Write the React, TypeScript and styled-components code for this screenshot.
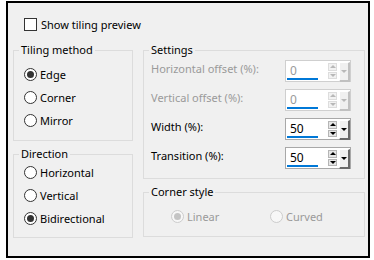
import styled, { createGlobalStyle } from "styled-components";

const GlobalStyle = createGlobalStyle`
  body {
    margin: 0;
    background: #ffffff;
    font-family: "Noto Sans", "DejaVu Sans", sans-serif;
    font-size: 11px;
    color: #000000;
  }
`;

const disabledText = "#9a9a9a";

const Frame = styled.div`
  box-sizing: border-box;
  width: 364px;
  height: 257px;
  margin: 1px 0 0 6px;
  border: 2px solid #000;
  background: #f0f0f0;
  padding: 15px 3px 0 5px;
  display: flex;
  flex-direction: column;
`;

const CheckRow = styled.label`
  display: flex;
  align-items: center;
  height: 13px;
  margin-left: 11px;
  gap: 4px;
`;

const CheckBox = styled.span`
  box-sizing: border-box;
  width: 13px;
  height: 13px;
  border: 1px solid #333;
  background: #fff;
  flex: none;
`;

const Columns = styled.div`
  display: flex;
  gap: 10px;
  margin-top: 12px;
`;

const Column = styled.div<{ $width?: number }>`
  display: flex;
  flex-direction: column;
  gap: 6px;
  ${({ $width }) => ($width ? `width: ${$width}px;` : "flex: 1;")}
`;

const Group = styled.fieldset<{ $height: number }>`
  box-sizing: border-box;
  margin: 0;
  height: ${({ $height }) => $height}px;
  border: 1px solid #dcdcdc;
  padding: 0;
  min-width: 0;
`;

const Legend = styled.legend`
  margin-left: 5px;
  padding: 0 2px;
  line-height: 14px;
`;

const RadioList = styled.div<{ $pad: string }>`
  display: flex;
  flex-direction: column;
  padding: ${({ $pad }) => $pad};
`;

const RadioRow = styled.label<{ $disabled?: boolean }>`
  display: flex;
  align-items: center;
  height: 23px;
  gap: 3px;
  color: ${({ $disabled }) => ($disabled ? disabledText : "#000")};
`;

const RadioDot = styled.span<{ $checked?: boolean; $disabled?: boolean }>`
  box-sizing: border-box;
  width: 13px;
  height: 13px;
  border-radius: 50%;
  border: 1px solid ${({ $disabled }) => ($disabled ? "#cccccc" : "#333")};
  background: ${({ $disabled }) => ($disabled ? "#f7f7f7" : "#fff")};
  display: flex;
  align-items: center;
  justify-content: center;
  flex: none;

  &::after {
    content: "";
    width: 7px;
    height: 7px;
    border-radius: 50%;
    background: ${({ $disabled }) => ($disabled ? "#c4c4c4" : "#333")};
    display: ${({ $checked }) => ($checked ? "block" : "none")};
  }
`;

const SettingList = styled.div`
  display: flex;
  flex-direction: column;
  gap: 7px;
  padding: 3px 13px 0 7px;
`;

const SettingRow = styled.div<{ $disabled?: boolean }>`
  display: flex;
  justify-content: space-between;
  align-items: flex-start;
  height: 22px;
  color: ${({ $disabled }) => ($disabled ? disabledText : "#000")};
`;

const SettingLabel = styled.span`
  line-height: 16px;
  margin-top: 1px;
`;

const SpinBox = styled.div<{ $disabled?: boolean }>`
  box-sizing: border-box;
  width: 66px;
  height: 22px;
  display: flex;
  border: 1px solid ${({ $disabled }) => ($disabled ? "#cfcfcf" : "#a8a8a8")};
  background: #fff;
`;

const Field = styled.div`
  flex: 1;
  display: flex;
  flex-direction: column;
  padding: 2px 0 1px 1px;
`;

const Value = styled.span<{ $disabled?: boolean }>`
  padding-left: 3px;
  font-size: 12px;
  line-height: 15px;
  color: ${({ $disabled }) => ($disabled ? disabledText : "#000")};
`;

const Bar = styled.span`
  margin-top: auto;
  width: 31px;
  height: 3px;
  background: #0078d7;
`;

const Stepper = styled.div`
  width: 9px;
  margin: 2px 2px 2px 0;
  display: flex;
  flex-direction: column;
  gap: 1px;
`;

const StepButton = styled.span<{ $disabled?: boolean; $down?: boolean }>`
  flex: 1;
  display: flex;
  align-items: center;
  justify-content: center;
  background: ${({ $disabled }) => ($disabled ? "#f2f2f2" : "#e6e6e6")};
  border: 1px solid ${({ $disabled }) => ($disabled ? "#dddddd" : "#b5b5b5")};

  &::after {
    content: "";
    border-left: 3px solid transparent;
    border-right: 3px solid transparent;
    ${({ $down, $disabled }) =>
      $down
        ? `border-top: 3px solid ${$disabled ? "#b8b8b8" : "#000"};`
        : `border-bottom: 3px solid ${$disabled ? "#b8b8b8" : "#000"};`}
  }
`;

const DropButton = styled.span<{ $disabled?: boolean }>`
  box-sizing: border-box;
  width: 11px;
  margin: 1px 0 -1px 0;
  display: flex;
  align-items: center;
  justify-content: center;
  background: #f0f0f0;
  border-top: 1px solid #ffffff;
  border-left: 1px solid #ffffff;
  border-right: 2px solid ${({ $disabled }) => ($disabled ? "#c0c0c0" : "#696969")};
  border-bottom: 2px solid ${({ $disabled }) => ($disabled ? "#c0c0c0" : "#696969")};

  &::after {
    content: "";
    border-left: 3px solid transparent;
    border-right: 3px solid transparent;
    border-top: 3px solid ${({ $disabled }) => ($disabled ? "#b8b8b8" : "#000")};
  }
`;

const CornerRow = styled.div`
  display: grid;
  grid-template-columns: 99px auto;
  padding: 6px 0 0 27px;
`;

type Spin = { label: string; value: string; disabled?: boolean };

const settings: Spin[] = [
  { label: "Horizontal offset (%):", value: "0", disabled: true },
  { label: "Vertical offset (%):", value: "0", disabled: true },
  { label: "Width (%):", value: "50" },
  { label: "Transition (%):", value: "50" },
];

const Radio = ({
  label,
  checked,
  disabled,
}: {
  label: string;
  checked?: boolean;
  disabled?: boolean;
}) => (
  <RadioRow $disabled={disabled}>
    <RadioDot $checked={checked} $disabled={disabled} />
    {label}
  </RadioRow>
);

const App = () => {
  return (
    <>
      <GlobalStyle />
      <Frame>
        <CheckRow>
          <CheckBox />
          Show tiling preview
        </CheckRow>
        <Columns>
          <Column $width={120}>
            <Group $height={98}>
              <Legend>Tiling method</Legend>
              <RadioList $pad="6px 0 0 10px">
                <Radio label="Edge" checked />
                <Radio label="Corner" />
                <Radio label="Mirror" />
              </RadioList>
            </Group>
            <Group $height={91}>
              <Legend>Direction</Legend>
              <RadioList $pad="0 0 0 10px">
                <Radio label="Horizontal" />
                <Radio label="Vertical" />
                <Radio label="Bidirectional" checked />
              </RadioList>
            </Group>
          </Column>
          <Column>
            <Group $height={136}>
              <Legend>Settings</Legend>
              <SettingList>
                {settings.map((s) => (
                  <SettingRow key={s.label} $disabled={s.disabled}>
                    <SettingLabel>{s.label}</SettingLabel>
                    <SpinBox $disabled={s.disabled}>
                      <Field>
                        <Value $disabled={s.disabled}>{s.value}</Value>
                        <Bar />
                      </Field>
                      <Stepper>
                        <StepButton $disabled={s.disabled} />
                        <StepButton $disabled={s.disabled} $down />
                      </Stepper>
                      <DropButton $disabled={s.disabled} />
                    </SpinBox>
                  </SettingRow>
                ))}
              </SettingList>
            </Group>
            <Group $height={52}>
              <Legend>Corner style</Legend>
              <CornerRow>
                <Radio label="Linear" checked disabled />
                <Radio label="Curved" disabled />
              </CornerRow>
            </Group>
          </Column>
        </Columns>
      </Frame>
    </>
  );
};

export default App;
